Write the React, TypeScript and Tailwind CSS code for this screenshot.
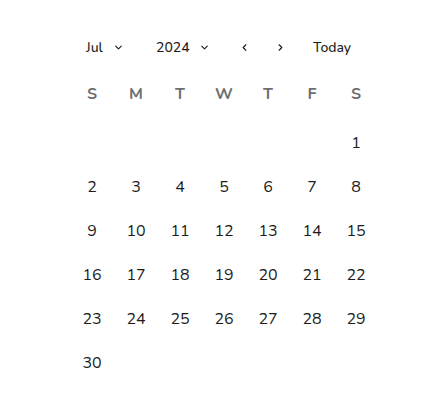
import { ChevronDown, ChevronLeft, ChevronRight } from "lucide-react";

const weekdays = ["S", "M", "T", "W", "T", "F", "S"];

// leading blanks so the 1st lands on Saturday
const cells: (number | null)[] = [
  ...Array(6).fill(null),
  ...Array.from({ length: 30 }, (_, i) => i + 1),
];

export default function App() {
  return (
    <div
      className="w-[448px] h-[418px] bg-white text-[#1c1c1c]"
      style={{ fontFamily: '"Nunito", "Open Sans", "Noto Sans", sans-serif' }}
    >
      <div className="mx-auto w-[308px] pt-[31px]">
        <div className="flex items-center h-8 pl-4 text-[14px] font-medium">
          <button type="button" className="flex items-center gap-[10px] w-[70px]">
            <span>Jul</span>
            <ChevronDown size={11} strokeWidth={2.5} />
          </button>
          <button type="button" className="flex items-center gap-[9px] w-[83px]">
            <span>2024</span>
            <ChevronDown size={11} strokeWidth={2.5} />
          </button>
          <button type="button" className="flex items-center w-[36px]">
            <ChevronLeft size={11} strokeWidth={2.5} />
          </button>
          <button type="button" className="flex items-center w-[38px]">
            <ChevronRight size={11} strokeWidth={2.5} />
          </button>
          <button type="button">Today</button>
        </div>

        <div className="grid grid-cols-7 mt-[9px]">
          {weekdays.map((d, i) => (
            <div
              key={i}
              className="flex justify-center items-center h-11 text-[16px] font-bold text-[#6e6e6e]"
            >
              {d}
            </div>
          ))}
        </div>

        <div className="grid grid-cols-7 mt-[5px]">
          {cells.map((n, i) => (
            <div key={i} className="flex justify-center items-center h-11 text-[16px]">
              {n}
            </div>
          ))}
        </div>
      </div>
    </div>
  );
}
